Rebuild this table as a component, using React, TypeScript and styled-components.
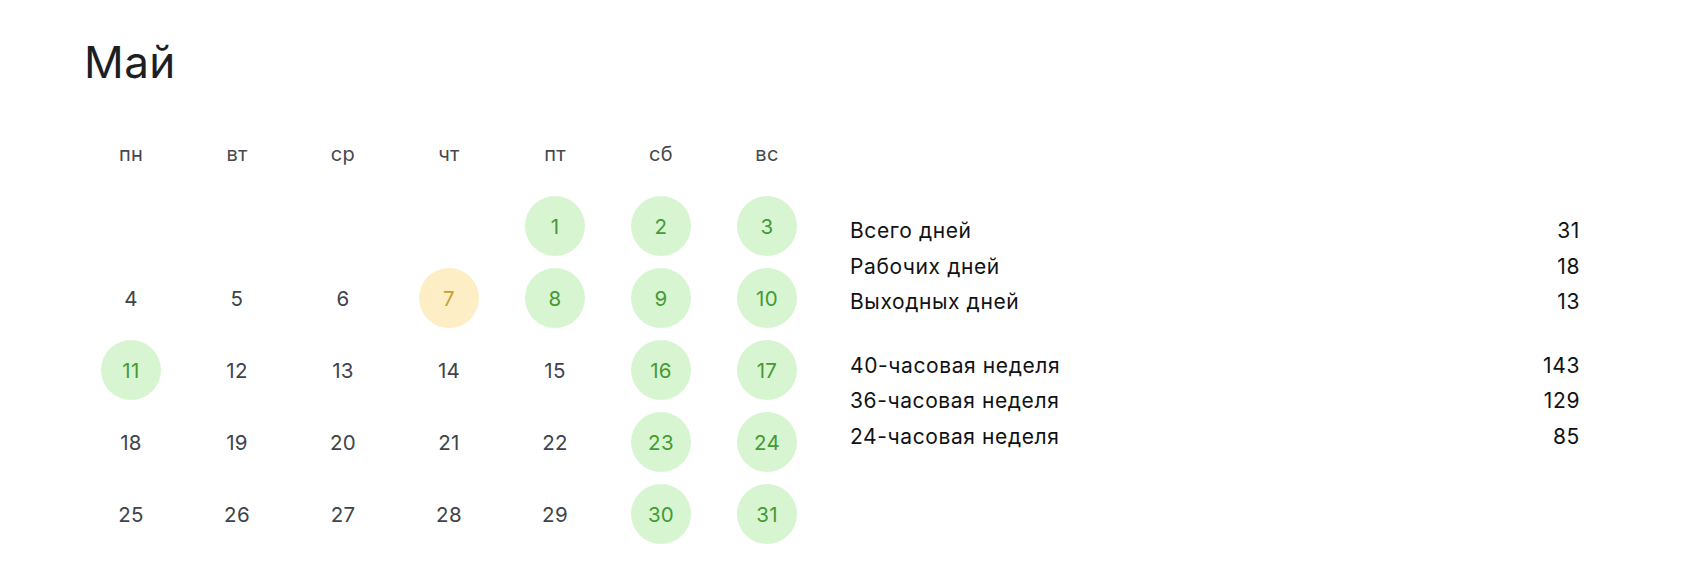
import React from "react";
import styled, { createGlobalStyle } from "styled-components";

const Global = createGlobalStyle`
  html, body { margin: 0; padding: 0; background: #ffffff; }
  body { font-family: Inter, "Noto Sans", sans-serif; }
`;

const Page = styled.div`
  display: flex;
  flex-direction: column;
  padding: 37px 107px 0 78px;
`;

const Title = styled.h1`
  margin: 0 0 30px 6px;
  font-size: 44px;
  font-weight: 400;
  line-height: 51px;
  letter-spacing: 0.4px;
  color: #1c1f24;
`;

const Body = styled.div`
  display: flex;
  align-items: flex-start;
  gap: 30px;
`;

const Grid = styled.div`
  display: grid;
  grid-template-columns: repeat(7, 106px);
  grid-auto-rows: 72px;
`;

const Weekday = styled.div`
  display: flex;
  align-items: center;
  justify-content: center;
  font-size: 20px;
  letter-spacing: 0.3px;
  color: #45484d;
`;

type Kind = "plain" | "off" | "short";

const Cell = styled.div`
  display: flex;
  align-items: center;
  justify-content: center;
`;

const Day = styled.div<{ $kind: Kind }>`
  width: 60px;
  height: 60px;
  border-radius: 50%;
  display: flex;
  align-items: center;
  justify-content: center;
  font-size: 20.5px;
  letter-spacing: 0.3px;
  background: ${(p) =>
    p.$kind === "off" ? "#d8f5d1" : p.$kind === "short" ? "#fdeec6" : "transparent"};
  color: ${(p) =>
    p.$kind === "off" ? "#459a34" : p.$kind === "short" ? "#c9a22b" : "#404449"};
`;

const Stats = styled.div`
  flex: 1;
  margin-top: 95px;
  display: flex;
  flex-direction: column;
  gap: 28px;
`;

const Group = styled.div`
  display: flex;
  flex-direction: column;
`;

const Row = styled.div`
  display: flex;
  justify-content: space-between;
  font-size: 21px;
  letter-spacing: 0.6px;
  line-height: 35.5px;
  color: #111214;
`;

const weekdays = ["пн", "вт", "ср", "чт", "пт", "сб", "вс"];
const offDays = new Set([1, 2, 3, 8, 9, 10, 11, 16, 17, 23, 24, 30, 31]);
const shortDays = new Set([7]);

export default function App() {
  const cells: (number | null)[] = [null, null, null, null];
  for (let d = 1; d <= 31; d++) cells.push(d);

  return (
    <>
      <Global />
      <Page>
        <Title>Май</Title>
        <Body>
          <Grid>
            {weekdays.map((w) => (
              <Weekday key={w}>{w}</Weekday>
            ))}
            {cells.map((d, i) => (
              <Cell key={i}>
                {d !== null && (
                  <Day $kind={offDays.has(d) ? "off" : shortDays.has(d) ? "short" : "plain"}>
                    {d}
                  </Day>
                )}
              </Cell>
            ))}
          </Grid>
          <Stats>
            <Group>
              <Row><span>Всего дней</span><span>31</span></Row>
              <Row><span>Рабочих дней</span><span>18</span></Row>
              <Row><span>Выходных дней</span><span>13</span></Row>
            </Group>
            <Group>
              <Row><span>40-часовая неделя</span><span>143</span></Row>
              <Row><span>36-часовая неделя</span><span>129</span></Row>
              <Row><span>24-часовая неделя</span><span>85</span></Row>
            </Group>
          </Stats>
        </Body>
      </Page>
    </>
  );
}
